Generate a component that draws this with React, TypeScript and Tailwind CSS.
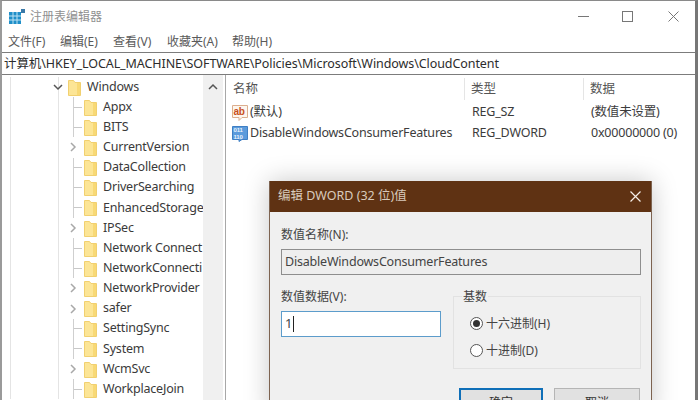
const uiFont = '[font-family:"Noto_Sans","Noto_Sans_CJK_SC",sans-serif]'

const menus = [
  { label: '文件(F)', className: 'w-[52px]' },
  { label: '编辑(E)', className: 'w-[53px]' },
  { label: '查看(V)', className: 'w-[54px]' },
  { label: '收藏夹(A)', className: 'w-[65px]' },
  { label: '帮助(H)', className: 'w-[50px]' },
]

const keys = [
  { name: 'Appx', expand: false },
  { name: 'BITS', expand: false },
  { name: 'CurrentVersion', expand: true },
  { name: 'DataCollection', expand: false },
  { name: 'DriverSearching', expand: false },
  { name: 'EnhancedStorage', expand: false },
  { name: 'IPSec', expand: true },
  { name: 'Network Connect', expand: false },
  { name: 'NetworkConnecti', expand: false },
  { name: 'NetworkProvider', expand: true },
  { name: 'safer', expand: true },
  { name: 'SettingSync', expand: false },
  { name: 'System', expand: false },
  { name: 'WcmSvc', expand: true },
  { name: 'WorkplaceJoin', expand: false },
]

const Folder = () => (
  <svg width="13" height="17" viewBox="0 0 13 17" className="shrink-0">
    <path d="M0.5 1.5 H5.5 L7 3.5 H12.5 V16.5 H0.5 Z" fill="#fce596" stroke="#f1d070" strokeWidth="1" />
    <rect x="9" y="4" width="3" height="12" fill="#f8d976" />
  </svg>
)

const Chevron = ({ dir, color }: { dir: 'right' | 'down' | 'up'; color: string }) => {
  const d = dir === 'right' ? 'M2 1 L6 5 L2 9' : dir === 'down' ? 'M1 3 L5 7 L9 3' : 'M1 7 L5 3 L9 7'
  return (
    <svg width="10" height="10" viewBox="0 0 10 10" className="shrink-0">
      <path d={d} fill="none" stroke={color} strokeWidth="1.5" />
    </svg>
  )
}

const Guides = () => (
  <>
    <div className="ml-[8px] h-full w-px shrink-0 bg-[#e4e4e4]" />
    <div className="ml-[47px] h-full w-px shrink-0 bg-[#e4e4e4]" />
  </>
)

const TreeRow = ({ name, expand }: { name: string; expand: boolean }) => (
  <div className="flex h-[20.15px] items-center overflow-hidden whitespace-nowrap">
    <Guides />
    {expand ? (
      <div className="ml-[10px] w-[15px] shrink-0">
        <Chevron dir="right" color="#a8a8a8" />
      </div>
    ) : (
      <>
        <div className="ml-[14px] h-full w-px shrink-0 bg-[#cfcfcf]" />
        <div className="mr-[2px] h-px w-[8px] shrink-0 bg-[#c8c8c8]" />
      </>
    )}
    <Folder />
    <span className="ml-[6px] text-[12.5px] tracking-[-0.2px] text-[#3a3a3a]">{name}</span>
  </div>
)

const RegIcon = ({ kind }: { kind: 'ab' | 'bin' }) =>
  kind === 'ab' ? (
    <svg width="16" height="16" viewBox="0 0 16 16" className="shrink-0">
      <path d="M0.5 0.5 H15.5 V12.5 H10 L7 15.5 V12.5 H0.5 Z" fill="#fdf6ee" stroke="#dcae8e" />
      <text x="1.5" y="10" fontSize="10" fontWeight="700" fill="#c8501c" fontFamily="Liberation Sans">ab</text>
    </svg>
  ) : (
    <svg width="16" height="16" viewBox="0 0 16 16" className="shrink-0">
      <path d="M0.5 0.5 H15.5 V13.5 H10 L7 15.5 V13.5 H0.5 Z" fill="#5b9bdc" stroke="#3f7fc4" />
      <text x="1.5" y="6" fontSize="6" fontWeight="700" fill="#eaf3fb" fontFamily="Liberation Sans">011</text>
      <text x="1.5" y="12.5" fontSize="6" fontWeight="700" fill="#eaf3fb" fontFamily="Liberation Sans">110</text>
    </svg>
  )

const ValueRow = ({ icon, name, type, data }: { icon: 'ab' | 'bin'; name: string; type: string; data: string }) => (
  <div className="flex h-[21px] items-center whitespace-nowrap text-[12.5px] tracking-[-0.2px] text-[#3c3c3c]">
    <div className="ml-[6px] w-[18px] shrink-0">
      <RegIcon kind={icon} />
    </div>
    <span className="w-[222px] shrink-0">{name}</span>
    <span className="w-[119px] shrink-0">{type}</span>
    <span>{data}</span>
  </div>
)

const Radio = ({ checked, label }: { checked: boolean; label: string }) => (
  <div className="flex h-[27px] items-center text-[12px] text-[#444]">
    <div className="flex h-[13px] w-[13px] items-center justify-center rounded-full border border-[#555] bg-white">
      {checked ? <div className="h-[7px] w-[7px] rounded-full bg-[#333]" /> : null}
    </div>
    <span className="ml-[3px]">{label}</span>
  </div>
)

const Dialog = () => (
  <div className="absolute top-[181px] left-[269px] w-[383px] border-x border-[#7d6350] bg-[#f0f0f0] shadow-[0_0_24px_rgba(0,0,0,0.22)]">
    <div className="flex h-[31px] items-center justify-between bg-[#5f3213] pr-[10px] pl-[8px]">
      <span className="text-[12.5px] text-[#d8cabc]">编辑 DWORD (32 位)值</span>
      <svg width="11" height="11" viewBox="0 0 11 11">
        <path d="M0.5 0.5 L10.5 10.5 M10.5 0.5 L0.5 10.5" stroke="#f5eee8" strokeWidth="1.2" />
      </svg>
    </div>
    <div className="h-[190px] px-[11px]">
      <div className="mt-[14px] text-[12px] leading-[18px] text-[#444]">数值名称(N):</div>
      <div className="mt-[5px] flex h-[26px] w-[360px] items-center border border-[#8e8e8e] bg-[#eeeeee] px-[3px] text-[12.5px] tracking-[-0.2px] text-[#444]">
        DisableWindowsConsumerFeatures
      </div>
      <div className="mt-[13px] flex">
        <div className="w-[172px] shrink-0">
          <div className="text-[12px] leading-[18px] text-[#444]">数值数据(V):</div>
          <div className="mt-[5px] flex h-[26px] w-[160px] items-center border border-[#5c9ccb] bg-white px-[3px] text-[13px] text-[#444]">
            1<div className="ml-px h-[16px] w-px bg-[#222]" />
          </div>
        </div>
        <div className="relative mt-[8px] h-[73px] w-[188px] shrink-0 border border-[#e2e2e2] pt-[13px] pl-[16px]">
          <span className="absolute top-[-9px] left-[8px] bg-[#f0f0f0] px-px text-[12px] leading-[18px] text-[#444]">
            基数
          </span>
          <Radio checked label="十六进制(H)" />
          <Radio checked={false} label="十进制(D)" />
        </div>
      </div>
      <div className="mt-[19px] flex justify-end gap-[11px]">
        <div className="flex h-[30px] w-[84px] items-center justify-center border-2 border-[#0f6fb8] bg-[#e1e1e1] text-[12px] text-[#333]">
          确定
        </div>
        <div className="flex h-[30px] w-[86px] items-center justify-center border border-[#b5b5b5] bg-[#e1e1e1] text-[12px] text-[#333]">
          取消
        </div>
      </div>
    </div>
  </div>
)

export default function App() {
  return (
    <div className={`relative h-[400px] w-[698px] overflow-hidden bg-white ${uiFont}`}>
      <div className="flex h-full flex-col border-t border-l-2 border-r-[3px] border-t-[#8a8a8a] border-l-[#9a9a9a] border-r-[#777]">
        {/* title bar */}
        <div className="flex h-[31px] shrink-0 items-center">
          <svg width="16" height="16" viewBox="0 0 16 16" className="ml-[7px] shrink-0">
            <path d="M0 3 H12 V15 H0 Z" fill="#1f8fc9" />
            <path d="M4 3 V15 M8 3 V15 M0 7 H12 M0 11 H12" stroke="#bfe3f3" strokeWidth="1" />
            <rect x="12" y="0" width="4" height="4" fill="#3a79a8" />
          </svg>
          <span className="ml-[5px] text-[12px] text-[#909090]">注册表编辑器</span>
          <div className="ml-auto flex items-center">
            <div className="h-px w-[11px] bg-[#777]" />
            <div className="ml-[33px] h-[11px] w-[11px] border border-[#777]" />
            <svg width="11" height="11" viewBox="0 0 11 11" className="mr-[16px] ml-[35px]">
              <path d="M0.5 0.5 L10.5 10.5 M10.5 0.5 L0.5 10.5" stroke="#777" strokeWidth="1" />
            </svg>
          </div>
        </div>
        {/* menu */}
        <div className="flex h-[20px] shrink-0 items-center pb-px pl-[6px] text-[12px] text-[#5a5a5a]">
          {menus.map((m) => (
            <span key={m.label} className={m.className}>
              {m.label}
            </span>
          ))}
        </div>
        {/* address */}
        <div className="flex h-[23px] shrink-0 items-center border-y border-[#7c7c7c] pt-px pl-[2px] text-[12.5px] tracking-[-0.08px] text-[#2c2c2c]">
          计算机\HKEY_LOCAL_MACHINE\SOFTWARE\Policies\Microsoft\Windows\CloudContent
        </div>
        <div className="flex min-h-0 flex-1">
          {/* tree */}
          <div className="w-[201px] shrink-0 overflow-hidden pt-[2px]">
            <div className="flex h-[20.15px] items-center whitespace-nowrap">
              <Guides />
              <div className="ml-[-6px]">
                <Chevron dir="down" color="#555" />
              </div>
              <div className="ml-[5px]">
                <Folder />
              </div>
              <span className="ml-[6px] text-[12.5px] tracking-[-0.2px] text-[#3a3a3a]">Windows</span>
            </div>
            {keys.map((k) => (
              <TreeRow key={k.name} name={k.name} expand={k.expand} />
            ))}
          </div>
          {/* scrollbar */}
          <div className="flex w-[20px] shrink-0 justify-center bg-[#f0f0f0] pt-[7px]">
            <Chevron dir="up" color="#555" />
          </div>
          {/* splitter */}
          <div className="w-[2px] shrink-0" />
          <div className="w-px shrink-0 bg-[#a8a8a8]" />
          {/* values */}
          <div className="min-w-0 flex-1">
            <div className="mb-px flex h-[26px] items-center pt-[2px] text-[12.5px] text-[#555]">
              <span className="ml-[7px] w-[231px] shrink-0">名称</span>
              <div className="h-[22px] w-px shrink-0 bg-[#e5e5e5]" />
              <span className="ml-[6px] w-[112px] shrink-0">类型</span>
              <div className="h-[22px] w-px shrink-0 bg-[#e5e5e5]" />
              <span className="ml-[6px]">数据</span>
            </div>
            <ValueRow icon="ab" name="(默认)" type="REG_SZ" data="(数值未设置)" />
            <ValueRow icon="bin" name="DisableWindowsConsumerFeatures" type="REG_DWORD" data="0x00000000 (0)" />
          </div>
        </div>
      </div>
      <Dialog />
    </div>
  )
}
